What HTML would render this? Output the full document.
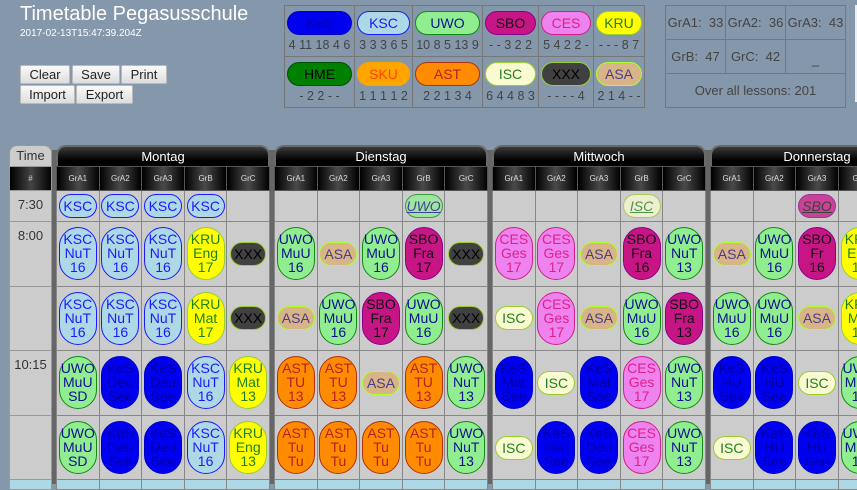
<!DOCTYPE html>
<html><head><meta charset="utf-8"><style>
*{box-sizing:border-box}
body{margin:0;width:857px;height:484px;overflow:hidden;background:#8597aa;font-family:"Liberation Sans",sans-serif;position:relative}
.a{position:absolute}
h1{position:absolute;left:20px;top:3px;margin:0;font-weight:normal;font-size:20px;color:#fff}
.ts{left:20px;top:28px;font-size:10px;color:#fff}
.btn{position:absolute;height:19px;border:1px solid #bbb;border-radius:2px;background:linear-gradient(#fafafa,#ddd);font-size:13px;color:#222;text-align:center;line-height:17px}
table{border-collapse:collapse;table-layout:fixed}
.lc{position:absolute;border:1px solid #777;height:52px}
.lc .p{position:absolute;left:2px;right:2px;top:5px;width:auto;height:24px;line-height:22px;padding:0;border-radius:12px;font-size:14px}
.lc .n{position:absolute;left:-3px;right:-3px;top:32px;text-align:center;color:#444;font-size:12.5px;white-space:nowrap;line-height:14px}
.st{left:665px;top:5px;width:181px}
.st td{border:1px solid #777;text-align:center;color:#444;font-size:13px;height:34px;white-space:nowrap}
.dark{left:52px;top:150px;width:805px;height:334px;background:#666}
.day{position:absolute;top:145px;width:214px}
.dh{height:21px;background:linear-gradient(#3a3a3a,#000 70%);border:2px solid #6a6a6a;border-bottom:none;border-radius:10px 10px 0 0;color:#fff;font-size:13px;text-align:center;line-height:19px}
.day table{width:214px}
.day td{border:1px solid #888;padding:0;text-align:center;vertical-align:middle;background:#ccc}
.day tr.sh td{height:24px;background:linear-gradient(to right,#000,#4a4a4a 50%,#000);color:#ddd;font-size:8px;border-color:#555}
tr.r0 td{height:31px}
tr.r td{height:64.6px}
tr.b td{height:10px;background:#add8e6}
.p{display:inline-block;width:38px;border:1px solid;border-radius:19px;font-size:14px;line-height:14px;padding:4px 0 5px;text-align:center;vertical-align:middle;white-space:nowrap}
.s{padding:4px 0 4px;border-radius:12px;height:24px}
.i{font-style:italic;text-decoration:underline;opacity:.75}
.ksc{background:#add8e6;border-color:#1a1aff;color:#1a1aff}
.kes{background:#0000f0;border-color:#0000c0;color:#0000a0}
.uwo{background:#90ee90;border-color:#138a13;color:#101090}
.sbo{background:#c71585;border-color:#8b008b;color:#111}
.ces{background:#ee82ee;border-color:#d0208a;color:#e0208a}
.kru{background:#ff0;border-color:#9acd32;color:#208020}
.hme{background:#008000;border-color:#005000;color:#000}
.sku{background:#ffa500;border-color:#ffa500;color:#ff4500}
.ast{background:#ff8c00;border-color:#b03010;color:#b22222}
.isc{background:#fafad2;border-color:#9acd32;color:#208020}
.xxx{background:#404040;border-color:#9acd32;color:#000;width:36px}
.asa{background:#d8b486;border-color:#adff2f;color:#483d8b}
.tc{left:9px;top:145px;width:43px}
.tc .th{height:21px;background:#ccc;border-radius:8px 8px 0 0;border:1px solid #999;border-bottom:none;color:#333;font-size:13px;text-align:center;line-height:20px}
.tc table{width:43px}
.tc td{border:1px solid #999;background:#ccc;color:#333;font-size:13px;text-align:center;vertical-align:top;padding-top:6px}
.tc tr.sh td{background:linear-gradient(to right,#000,#444 50%,#000);color:#ccc;font-size:8px;vertical-align:middle;padding:0;height:24px}
</style></head><body>
<h1>Timetable Pegasusschule</h1>
<div class="a ts">2017-02-13T15:47:39.204Z</div>
<div class="btn" style="left:20px;top:65px;width:50px">Clear</div>
<div class="btn" style="left:72px;top:65px;width:48px">Save</div>
<div class="btn" style="left:121px;top:65px;width:46px">Print</div>
<div class="btn" style="left:20px;top:85px;width:55px">Import</div>
<div class="btn" style="left:76px;top:85px;width:57px">Export</div>

<div class="lc" style="left:284px;top:5px;width:71px"><div class="p kes">KeS</div><div class="n">4 11 18 4 6</div></div>
<div class="lc" style="left:354px;top:5px;width:59px"><div class="p ksc">KSC</div><div class="n">3 3 3 6 5</div></div>
<div class="lc" style="left:412px;top:5px;width:71px"><div class="p uwo">UWO</div><div class="n">10 8 5 13 9</div></div>
<div class="lc" style="left:482px;top:5px;width:57px"><div class="p sbo">SBO</div><div class="n">- - 3 2 2</div></div>
<div class="lc" style="left:538px;top:5px;width:56px"><div class="p ces">CES</div><div class="n">5 4 2 2 -</div></div>
<div class="lc" style="left:593px;top:5px;width:52px"><div class="p kru">KRU</div><div class="n">- - - 8 7</div></div>
<div class="lc" style="left:284px;top:56px;width:71px"><div class="p hme">HME</div><div class="n">- 2 2 - -</div></div>
<div class="lc" style="left:354px;top:56px;width:59px"><div class="p sku">SKU</div><div class="n">1 1 1 1 2</div></div>
<div class="lc" style="left:412px;top:56px;width:71px"><div class="p ast">AST</div><div class="n">2 2 1 3 4</div></div>
<div class="lc" style="left:482px;top:56px;width:57px"><div class="p isc">ISC</div><div class="n">6 4 4 8 3</div></div>
<div class="lc" style="left:538px;top:56px;width:56px"><div class="p xxx" style="width:auto">XXX</div><div class="n">- - - - 4</div></div>
<div class="lc" style="left:593px;top:56px;width:52px"><div class="p asa">ASA</div><div class="n">2 1 4 - -</div></div>

<table class="a st">
<tr><td>GrA1:&nbsp; 33</td><td>GrA2:&nbsp; 36</td><td>GrA3:&nbsp; 43</td></tr>
<tr><td>GrB:&nbsp; 47</td><td>GrC:&nbsp; 42</td><td style="vertical-align:bottom;padding-bottom:6px">_</td></tr>
<tr><td colspan="3">Over all lessons: 201</td></tr>
</table>
<div class="a" style="left:855px;top:5px;width:2px;height:97px;background:#eee"></div>

<div class="a dark"></div>
<div class="a tc"><div class="th">Time</div><table>
<tr class="sh"><td>#</td></tr>
<tr class="r0"><td style="height:31px">7:30</td></tr>
<tr><td style="height:64.6px">8:00</td></tr>
<tr><td style="height:64.6px"></td></tr>
<tr><td style="height:64.6px">10:15</td></tr>
<tr><td style="height:64.6px"></td></tr>
<tr><td style="height:10px;background:#add8e6"></td></tr>
</table></div>

<div class="day" style="left:56px"><div class="dh">Montag</div><table>
<tr class="sh"><td>GrA1</td><td>GrA2</td><td>GrA3</td><td>GrB</td><td>GrC</td></tr>
<tr class="r0"><td><span class="p s ksc">KSC</span></td><td><span class="p s ksc">KSC</span></td><td><span class="p s ksc">KSC</span></td><td><span class="p s ksc">KSC</span></td><td></td></tr>
<tr class="r"><td><span class="p ksc">KSC<br>NuT<br>16</span></td><td><span class="p ksc">KSC<br>NuT<br>16</span></td><td><span class="p ksc">KSC<br>NuT<br>16</span></td><td><span class="p kru">KRU<br>Eng<br>17</span></td><td><span class="p s xxx">XXX</span></td></tr>
<tr class="r"><td><span class="p ksc">KSC<br>NuT<br>16</span></td><td><span class="p ksc">KSC<br>NuT<br>16</span></td><td><span class="p ksc">KSC<br>NuT<br>16</span></td><td><span class="p kru">KRU<br>Mat<br>17</span></td><td><span class="p s xxx">XXX</span></td></tr>
<tr class="r"><td><span class="p uwo">UWO<br>MuU<br>SD</span></td><td><span class="p kes">KeS<br>Deu<br>See</span></td><td><span class="p kes">KeS<br>Deu<br>See</span></td><td><span class="p ksc">KSC<br>NuT<br>16</span></td><td><span class="p kru">KRU<br>Mat<br>13</span></td></tr>
<tr class="r"><td><span class="p uwo">UWO<br>MuU<br>SD</span></td><td><span class="p kes">KeS<br>Deu<br>See</span></td><td><span class="p kes">KeS<br>Deu<br>See</span></td><td><span class="p ksc">KSC<br>NuT<br>16</span></td><td><span class="p kru">KRU<br>Eng<br>13</span></td></tr>
<tr class="b"><td></td><td></td><td></td><td></td><td></td></tr>
</table></div>

<div class="day" style="left:274px"><div class="dh">Dienstag</div><table>
<tr class="sh"><td>GrA1</td><td>GrA2</td><td>GrA3</td><td>GrB</td><td>GrC</td></tr>
<tr class="r0"><td></td><td></td><td></td><td><span class="p s uwo i">UWO</span></td><td></td></tr>
<tr class="r"><td><span class="p uwo">UWO<br>MuU<br>16</span></td><td><span class="p s asa">ASA</span></td><td><span class="p uwo">UWO<br>MuU<br>16</span></td><td><span class="p sbo">SBO<br>Fra<br>17</span></td><td><span class="p s xxx">XXX</span></td></tr>
<tr class="r"><td><span class="p s asa">ASA</span></td><td><span class="p uwo">UWO<br>MuU<br>16</span></td><td><span class="p sbo">SBO<br>Fra<br>17</span></td><td><span class="p uwo">UWO<br>MuU<br>16</span></td><td><span class="p s xxx">XXX</span></td></tr>
<tr class="r"><td><span class="p ast">AST<br>TU<br>13</span></td><td><span class="p ast">AST<br>TU<br>13</span></td><td><span class="p s asa">ASA</span></td><td><span class="p ast">AST<br>TU<br>13</span></td><td><span class="p uwo">UWO<br>NuT<br>13</span></td></tr>
<tr class="r"><td><span class="p ast">AST<br>Tu<br>Tu</span></td><td><span class="p ast">AST<br>Tu<br>Tu</span></td><td><span class="p ast">AST<br>Tu<br>Tu</span></td><td><span class="p ast">AST<br>Tu<br>Tu</span></td><td><span class="p uwo">UWO<br>NuT<br>13</span></td></tr>
<tr class="b"><td></td><td></td><td></td><td></td><td></td></tr>
</table></div>

<div class="day" style="left:492px"><div class="dh">Mittwoch</div><table>
<tr class="sh"><td>GrA1</td><td>GrA2</td><td>GrA3</td><td>GrB</td><td>GrC</td></tr>
<tr class="r0"><td></td><td></td><td></td><td><span class="p s isc i">ISC</span></td><td></td></tr>
<tr class="r"><td><span class="p ces">CES<br>Ges<br>17</span></td><td><span class="p ces">CES<br>Ges<br>17</span></td><td><span class="p s asa">ASA</span></td><td><span class="p sbo">SBO<br>Fra<br>16</span></td><td><span class="p uwo">UWO<br>NuT<br>13</span></td></tr>
<tr class="r"><td><span class="p s isc">ISC</span></td><td><span class="p ces">CES<br>Ges<br>17</span></td><td><span class="p s asa">ASA</span></td><td><span class="p uwo">UWO<br>MuU<br>16</span></td><td><span class="p sbo">SBO<br>Fra<br>13</span></td></tr>
<tr class="r"><td><span class="p kes">KeS<br>Mat<br>See</span></td><td><span class="p s isc">ISC</span></td><td><span class="p kes">KeS<br>Mat<br>See</span></td><td><span class="p ces">CES<br>Ges<br>17</span></td><td><span class="p uwo">UWO<br>NuT<br>13</span></td></tr>
<tr class="r"><td><span class="p s isc">ISC</span></td><td><span class="p kes">KeS<br>Deu<br>See</span></td><td><span class="p kes">KeS<br>Deu<br>See</span></td><td><span class="p ces">CES<br>Ges<br>17</span></td><td><span class="p uwo">UWO<br>NuT<br>13</span></td></tr>
<tr class="b"><td></td><td></td><td></td><td></td><td></td></tr>
</table></div>

<div class="day" style="left:710px"><div class="dh">Donnerstag</div><table>
<tr class="sh"><td>GrA1</td><td>GrA2</td><td>GrA3</td><td>GrB</td><td>GrC</td></tr>
<tr class="r0"><td></td><td></td><td><span class="p s sbo i">SBO</span></td><td></td><td></td></tr>
<tr class="r"><td><span class="p s asa">ASA</span></td><td><span class="p uwo">UWO<br>MuU<br>16</span></td><td><span class="p sbo">SBO<br>Fr<br>16</span></td><td><span class="p kru">KRU<br>Eng<br>17</span></td><td></td></tr>
<tr class="r"><td><span class="p uwo">UWO<br>MuU<br>16</span></td><td><span class="p uwo">UWO<br>MuU<br>16</span></td><td><span class="p s asa">ASA</span></td><td><span class="p kru">KRU<br>Mat<br>17</span></td><td></td></tr>
<tr class="r"><td><span class="p kes">KeS<br>HU<br>See</span></td><td><span class="p kes">KeS<br>HU<br>See</span></td><td><span class="p s isc">ISC</span></td><td><span class="p uwo">UWO<br>MuU<br>16</span></td><td></td></tr>
<tr class="r"><td><span class="p s isc">ISC</span></td><td><span class="p kes">KeS<br>HU<br>See</span></td><td><span class="p kes">KeS<br>HU<br>See</span></td><td><span class="p uwo">UWO<br>MuU<br>16</span></td><td></td></tr>
<tr class="b"><td></td><td></td><td></td><td></td><td></td></tr>
</table></div>
</body></html>
